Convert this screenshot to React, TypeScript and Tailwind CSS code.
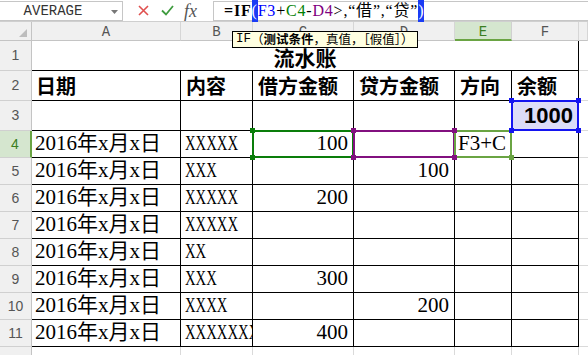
import type { ReactNode } from 'react';

// ── Fonts ───────────────────────────────────────────────────────────────────
const serif = "font-['Liberation_Serif','Noto_Sans_CJK_SC',serif]";
const heavy = "font-['Noto_Sans_CJK_SC',sans-serif] font-bold";
const mono = "font-['Liberation_Mono',monospace]";
const sans = "font-['Liberation_Sans',sans-serif]";

// ── Range highlight colours (formula references) ────────────────────────────
const selStyles = {
  blue:   { box: 'border-[#1414f0]', dot: 'bg-[#1414f0]' },
  green:  { box: 'border-[#0a7d0a]', dot: 'bg-[#0a7d0a]' },
  purple: { box: 'border-[#82107f]', dot: 'bg-[#82107f]' },
  active: { box: 'border-[#6aa443]', dot: 'bg-[#6aa443]' },
};

type Corner = 'tl' | 'tr' | 'bl' | 'br';

const cornerPos: Record<Corner, string> = {
  tl: '-left-[3px] -top-[3px]',
  tr: '-right-[3px] -top-[3px]',
  bl: '-left-[3px] -bottom-[3px]',
  br: '-right-[3px] -bottom-[3px]',
};

function Sel({ tone, corners }: { tone: keyof typeof selStyles; corners: Corner[] }) {
  const s = selStyles[tone];
  return (
    <>
      <div className={`absolute -inset-px z-10 border-2 pointer-events-none ${s.box}`} />
      {corners.map((c) => (
        <div key={c} className={`absolute z-20 w-[5px] h-[5px] ${s.dot} ${cornerPos[c]}`} />
      ))}
    </>
  );
}

const rows = [
  { n: 4,  item: 'XXXXX',   debit: '100', credit: '' },
  { n: 5,  item: 'XXX',     debit: '',    credit: '100' },
  { n: 6,  item: 'XXXXX',   debit: '200', credit: '' },
  { n: 7,  item: 'XXXXX',   debit: '',    credit: '' },
  { n: 8,  item: 'XX',      debit: '',    credit: '' },
  { n: 9,  item: 'XXX',     debit: '300', credit: '' },
  { n: 10, item: 'XXXX',    debit: '',    credit: '200' },
  { n: 11, item: 'XXXXXXX', debit: '400', credit: '' },
];

const cell = 'relative border-r border-b border-black flex items-center';
const rest = 'border-b border-[#dadada]';

function RowHead({ n, active }: { n: number; active?: boolean }) {
  return (
    <div
      className={`flex items-center justify-center border-b text-[14px] ${sans} ${
        active
          ? 'bg-[#d5e6cf] text-[#3b7d23] border-[#d0d0d0] border-r-2 border-r-[#6aa443]'
          : 'bg-[#f0f0f0] text-[#555] border-r border-[#d0d0d0] border-r-[#c4c4c4]'
      }`}
    >
      {n}
    </div>
  );
}

function ColHead({ children, active }: { children?: ReactNode; active?: boolean }) {
  return (
    <div
      className={`flex items-center justify-center pt-[3px] text-[14px] ${mono} border-r ${
        active
          ? 'bg-[#d5e6cf] text-[#3b7d23] border-[#d0d0d0] border-b-2 border-b-[#6aa443]'
          : 'bg-[#f0f0f0] text-[#555] border-[#d6d6d6] border-b border-b-[#c4c4c4]'
      }`}
    >
      {children}
    </div>
  );
}

function FormulaBar() {
  return (
    <div className="flex h-[22px] bg-white border-b border-[#cfcfcf]">
      {/* Name box */}
      <div className="relative flex items-center w-[123px] h-[20px] mt-px border border-l-0 border-[#c6c6c6]">
        <span className={`flex-1 text-center pr-[16px] text-[14px] text-[#333] ${mono}`}>AVERAGE</span>
        <svg className="absolute right-[4px] top-[8px]" width="7" height="4" viewBox="0 0 7 4">
          <path d="M0 0h7L3.5 4z" fill="#777" />
        </svg>
      </div>

      {/* Cancel / enter / fx */}
      <div className="flex items-center w-[90px] pl-[15px]">
        <svg width="11" height="11" viewBox="0 0 11 11">
          <path d="M1 1l9 9M10 1l-9 9" stroke="#e0504f" strokeWidth="1.6" />
        </svg>
        <svg className="ml-[12px]" width="13" height="11" viewBox="0 0 13 11">
          <path d="M1 5.5l4 4L12 1" stroke="#3e9b3e" strokeWidth="1.8" fill="none" />
        </svg>
        <span className={`ml-[10px] italic text-[18px] leading-none text-[#555] ${serif}`}>fx</span>
      </div>

      {/* Formula input */}
      <div className={`flex items-center flex-1 h-[20px] mt-px pl-[10px] border border-r-0 border-[#c6c6c6] whitespace-nowrap text-[16px] tracking-[0.8px] text-black ${serif}`}>
        <span className="font-bold">=IF</span>
        <span className="bg-[#1a3cf5] text-white">(</span>
        <span className="text-[#0000ff]">F3</span>
        <span>+</span>
        <span className="text-[#008000]">C4</span>
        <span>-</span>
        <span className="text-[#800080]">D4</span>
        <span>&gt;,“借”,“贷”</span>
        <span className="bg-[#1a3cf5] text-white">)</span>
      </div>
    </div>
  );
}

export default function App() {
  return (
    <div className="relative w-[588px] h-[355px] overflow-hidden bg-white">
      <FormulaBar />

      <div className="grid grid-cols-[32px_149px_72px_101px_101px_57px_67px_1fr] grid-rows-[19px_30px_30px_30px_repeat(9,27px)]">
        {/* Column headers */}
        <div className="flex items-end justify-end pr-[4px] pb-[3px] bg-[#f0f0f0] border-r border-b border-[#c4c4c4]">
          <svg width="8" height="8" viewBox="0 0 8 8">
            <path d="M8 0v8H0z" fill="#bdbdbd" />
          </svg>
        </div>
        <ColHead>A</ColHead>
        <ColHead>B</ColHead>
        <ColHead>C</ColHead>
        <ColHead>D</ColHead>
        <ColHead active>E</ColHead>
        <ColHead>F</ColHead>
        <ColHead />

        {/* Row 1 — merged title */}
        <RowHead n={1} />
        <div className="col-span-6 flex items-end justify-center pb-[2px] border-r border-b border-black">
          <span className={`text-[21px] leading-none ${heavy}`}>流水账</span>
        </div>
        <div className={rest} />

        {/* Row 2 — headings */}
        <RowHead n={2} />
        {['日期', '内容', '借方金额', '贷方金额', '方向', '余额'].map((h, i) => (
          <div key={h} className={`${cell} ${i === 0 ? 'pl-[4px]' : 'pl-[5px]'} text-[20px] ${heavy}`}>
            {h}
          </div>
        ))}
        <div className={rest} />

        {/* Row 3 — opening balance */}
        <RowHead n={3} />
        <div className={cell} />
        <div className={cell} />
        <div className={cell} />
        <div className={cell} />
        <div className={cell} />
        <div className={`${cell} justify-end pr-[5px] bg-[#dcdcf8] text-[22px] font-bold ${sans}`}>
          1000
          <Sel tone="blue" corners={['tl', 'tr', 'bl', 'br']} />
        </div>
        <div className={rest} />

        {/* Rows 4–11 */}
        {rows.map((r) => (
          <div key={r.n} className="contents">
            <RowHead n={r.n} active={r.n === 4} />
            <div className={`${cell} pl-[3px] text-[21px] ${serif}`}>2016年x月x日</div>
            <div className={`${cell} overflow-hidden pl-[4px] text-[21px] ${serif}`}>
              <span className="inline-block origin-left scale-x-[0.7] whitespace-nowrap">{r.item}</span>
            </div>
            <div className={`${cell} justify-end pr-[5px] text-[21px] ${serif}`}>
              {r.debit}
              {r.n === 4 && <Sel tone="green" corners={['tl', 'tr', 'bl', 'br']} />}
            </div>
            <div className={`${cell} justify-end pr-[5px] text-[21px] ${serif}`}>
              {r.credit}
              {r.n === 4 && <Sel tone="purple" corners={['tl', 'tr', 'bl', 'br']} />}
            </div>
            <div className={`${cell} pl-[3px] text-[21px] whitespace-nowrap ${serif}`}>
              {r.n === 4 && (
                <>
                  F3+C
                  <Sel tone="active" corners={['br']} />
                </>
              )}
            </div>
            <div className={cell} />
            <div className={rest} />
          </div>
        ))}

        {/* Row 12 — plain grid */}
        <RowHead n={12} />
        {[0, 1, 2, 3, 4, 5].map((i) => (
          <div key={i} className="border-r border-b border-[#dadada]" />
        ))}
        <div className={rest} />
      </div>

      {/* Function argument tooltip */}
      <div className="absolute left-[232px] top-[31px] z-30 flex items-center h-[17px] px-[3px] bg-[#ffffe1] border border-black whitespace-nowrap text-[12.5px] leading-none text-black font-['Noto_Sans_CJK_SC',sans-serif]">
        <span className={mono}>IF</span>
        <span>（</span>
        <span className="font-bold">测试条件</span>
        <span>，真值，［假值］）</span>
      </div>
    </div>
  );
}
